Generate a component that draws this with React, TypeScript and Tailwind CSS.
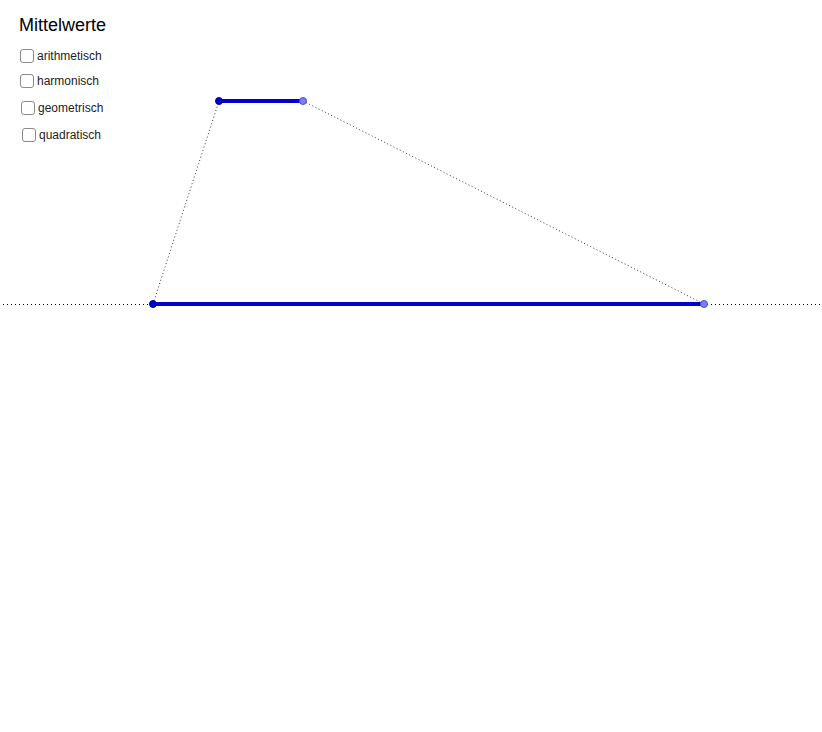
import React from "react";

const items = [
  { label: "arithmetisch", cls: "ml-[20px] mt-[0px]" },
  { label: "harmonisch", cls: "ml-[20px] mt-[11px]" },
  { label: "geometrisch", cls: "ml-[21px] mt-[13px]" },
  { label: "quadratisch", cls: "ml-[22px] mt-[13px]" },
];

function Box({ label, cls }: { label: string; cls: string }) {
  return (
    <label className={`flex items-center gap-[3px] ${cls}`}>
      <span className="block w-[14px] h-[14px] rounded-[3px] border border-[#8a8a8a] bg-white" />
      <span className="text-[12px] leading-[14px] text-[#222]">{label}</span>
    </label>
  );
}

export default function App() {
  return (
    <div
      className="relative w-[822px] h-[732px] bg-white overflow-hidden"
      style={{ fontFamily: '"Liberation Sans", Arial, sans-serif' }}
    >
      <svg className="absolute inset-0" width="822" height="732" viewBox="0 0 822 732">
        {/* baseline */}
        <line x1="3" y1="304.5" x2="822" y2="304.5" stroke="#000" strokeWidth="1" strokeDasharray="1 3" />
        {/* sides */}
        <line x1="153" y1="304" x2="219" y2="101" stroke="#333" strokeWidth="1" strokeDasharray="1 2.5" />
        <line x1="303" y1="101" x2="704" y2="304" stroke="#333" strokeWidth="1" strokeDasharray="1 2.5" />
        {/* segments */}
        <line x1="153" y1="304" x2="704" y2="304" stroke="#0000cc" strokeWidth="4" />
        <line x1="219" y1="101" x2="303" y2="101" stroke="#0000cc" strokeWidth="4" />
        {/* points */}
        <circle cx="153" cy="304" r="3.5" fill="#0000cc" stroke="#000099" strokeWidth="1" />
        <circle cx="219" cy="101" r="3.5" fill="#0000cc" stroke="#000099" strokeWidth="1" />
        <circle cx="303" cy="101" r="3.5" fill="#7f7fe5" stroke="#4d4dd6" strokeWidth="1" />
        <circle cx="704" cy="304" r="3.5" fill="#7f7fe5" stroke="#4d4dd6" strokeWidth="1" />
      </svg>

      <div className="absolute left-0 top-0 flex flex-col">
        <div className="ml-[19px] mt-[13px] text-[18px] leading-[24px] text-black">Mittelwerte</div>
        <div className="mt-[12px] flex flex-col">
          {items.map((it) => (
            <Box key={it.label} {...it} />
          ))}
        </div>
      </div>
    </div>
  );
}
